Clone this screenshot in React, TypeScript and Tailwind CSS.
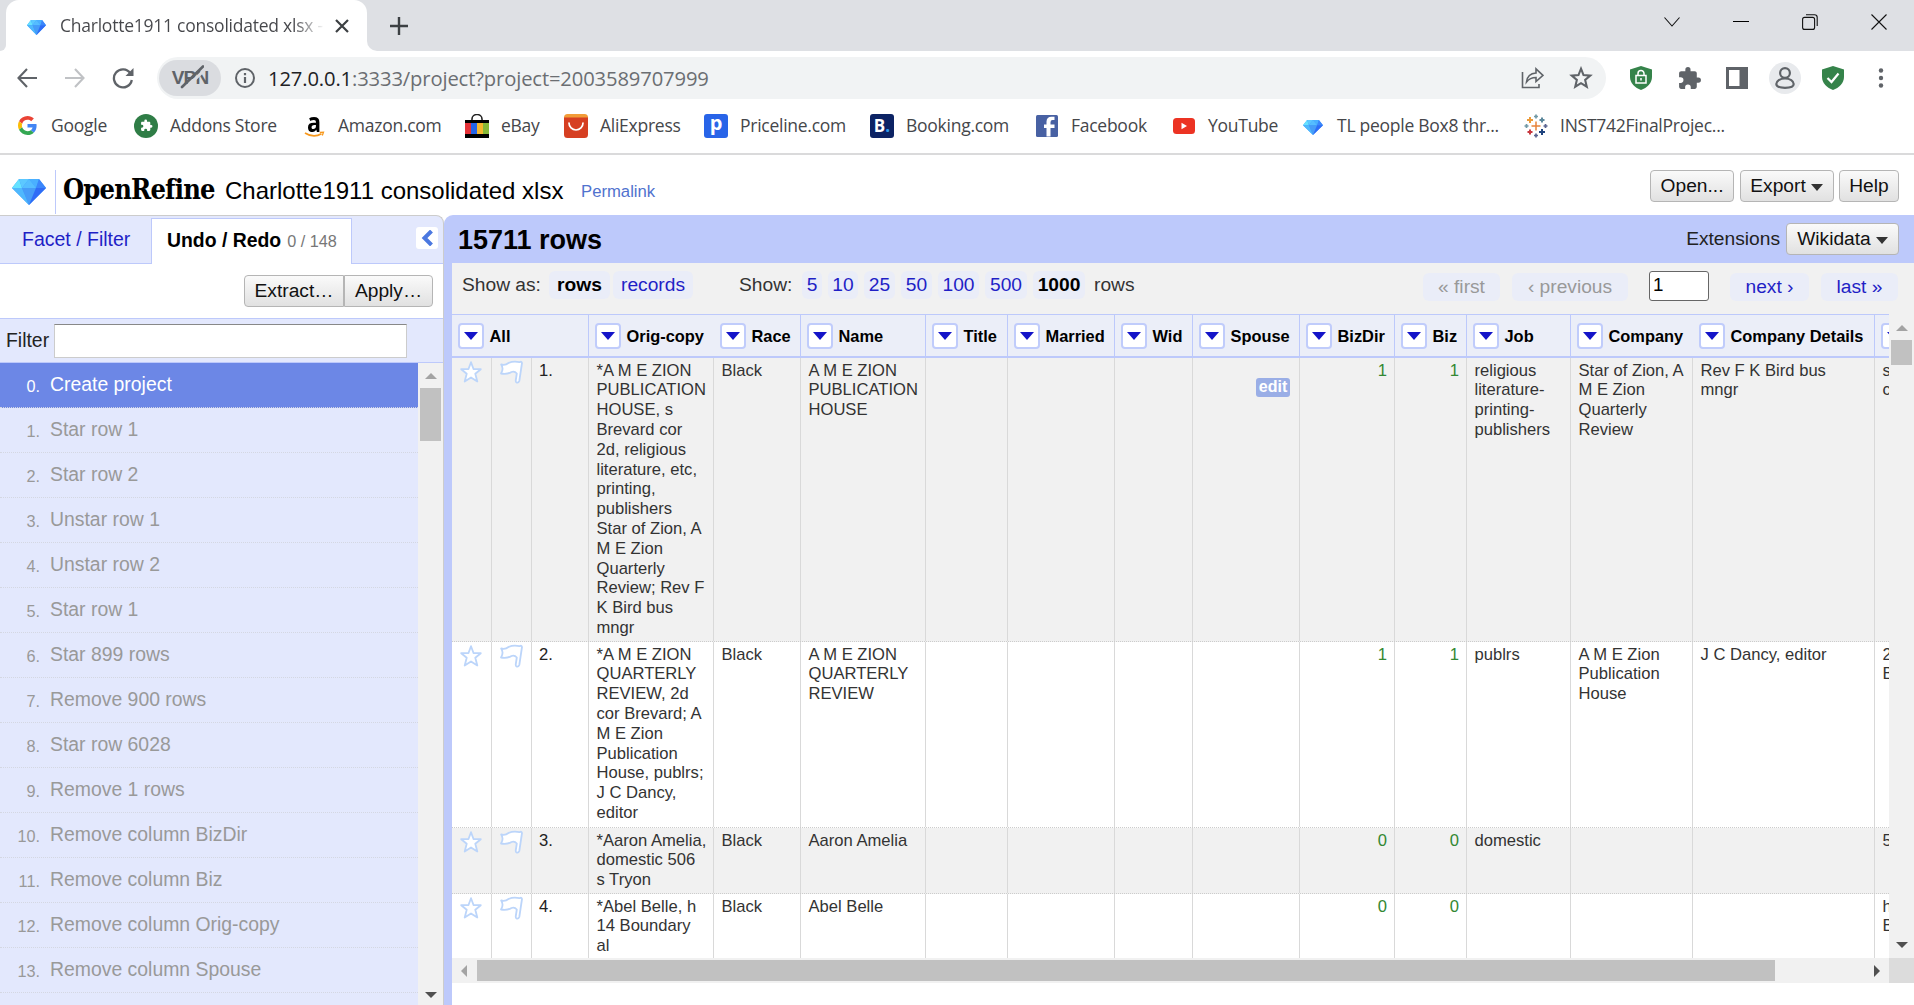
import React from "react";

const ARIAL = "font-['Liberation_Sans',Arial,sans-serif]";
const SEGOE = "font-['Open_Sans','Noto_Sans',sans-serif]";

function Diamond({ className }: { className: string }) {
  return (
    <svg viewBox="0 0 34 26" className={className} preserveAspectRatio="none">
      <path d="M7 0H27L34 9L17 26L0 9Z" fill="#3d9bfb" />
      <path d="M7 0L0 9H10Z" fill="#66e2ff" />
      <path d="M7 0H17L10 9Z" fill="#5cc8ff" />
      <path d="M17 0H27L24 9Z" fill="#4ab0ff" />
      <path d="M17 0L10 9H24Z" fill="#55bdff" />
      <path d="M27 0L34 9H24Z" fill="#3b86fb" />
      <path d="M0 9H10L17 26Z" fill="#4fb8fd" />
      <path d="M10 9H24L17 26Z" fill="#469cf8" />
      <path d="M24 9H34L17 26Z" fill="#2f6cf6" />
    </svg>
  );
}

function Puzzle({ className }: { className: string }) {
  return (
    <svg viewBox="0 0 24 24" className={className} fill="currentColor">
      <path d="M20.5 11H19V7c0-1.1-.9-2-2-2h-4V3.5a2.5 2.5 0 0 0-5 0V5H4c-1.1 0-2 .9-2 2v3.8h1.5a2.7 2.7 0 0 1 0 5.4H2V20c0 1.1.9 2 2 2h3.8v-1.5a2.7 2.7 0 0 1 5.4 0V22H17c1.1 0 2-.9 2-2v-4h1.5a2.5 2.5 0 0 0 0-5z" />
    </svg>
  );
}

function GoogleIcon() {
  return (
    <svg viewBox="0 0 48 48" className="h-[19px] w-[19px]">
      <path fill="#ea4335" d="M24 9.5c3.5 0 6.7 1.2 9.2 3.6l6.9-6.9C35.9 2.4 30.5 0 24 0 14.6 0 6.5 5.4 2.6 13.2l8 6.2C12.4 13.7 17.7 9.5 24 9.5z" />
      <path fill="#4285f4" d="M47 24.6c0-1.6-.2-3.1-.4-4.6H24v9h12.9c-.6 3-2.2 5.500-4.700 7.200l7.700 6C44.400 38 47 31.800 47 24.600z" />
      <path fill="#fbbc05" d="M10.500 28.600c-.5-1.500-.8-3-.8-4.600s.3-3.100.8-4.600l-8-6.200C.9 16.500 0 20.100 0 24s.9 7.500 2.600 10.800z" />
      <path fill="#34a853" d="M24 48c6.500 0 11.900-2.100 15.900-5.800l-7.700-6c-2.200 1.500-4.900 2.300-8.200 2.300-6.300 0-11.600-4.200-13.500-9.900l-8 6.200C6.500 42.600 14.600 48 24 48z" />
    </svg>
  );
}

function AddonsIcon() {
  return (
    <span className="flex h-6 w-6 items-center justify-center rounded-full bg-[#2f7d46] text-white">
      <Puzzle className="h-[13px] w-[13px]" />
    </span>
  );
}

function AmazonIcon() {
  return (
    <span className="relative block h-6 w-6">
      <span className={`absolute -top-[7px] left-[5px] origin-left scale-x-90 text-[26px] leading-[30px] font-bold text-black ${SEGOE}`}>a</span>
      <svg viewBox="0 0 24 24" className="absolute inset-0 h-6 w-6" fill="none">
        <path d="M3 19Q11.500 24.500 19.500 19.800" stroke="#f7981d" strokeWidth="1.700" />
        <path d="M17.800 18.300L21.500 18.200L20.300 21.500" stroke="#f7981d" strokeWidth="1.300" />
      </svg>
    </span>
  );
}

function EbayIcon() {
  return (
    <svg viewBox="0 0 24 24" className="h-6 w-6">
      <path d="M7 8V5a5 4.500 0 0 1 10 0v3" fill="none" stroke="#222" strokeWidth="1.600" />
      <path d="M0 6H24V24H0z" fill="#000" />
      <path d="M7.800 6a4.200 4.200 0 0 1 8.400 0z" fill="#fff" />
      <path d="M0 9H6V20H0z" fill="#e53238" />
      <path d="M6 9H12V20H6z" fill="#2565e8" />
      <path d="M12 9H18V20H12z" fill="#f5b72d" />
      <path d="M18 9H24V20H18z" fill="#86b837" />
    </svg>
  );
}

function AliIcon() {
  return (
    <svg viewBox="0 0 24 24" className="h-6 w-6">
      <rect width="24" height="14" rx="3.500" fill="#f29c38" />
      <path d="M0 3.500H24V20.500a3.500 3.500 0 0 1-3.500 3.500h-17A3.500 3.500 0 0 1 0 20.500z" fill="#d63f22" />
      <path d="M5 9a7 7 0 0 0 14 0" fill="none" stroke="#fff" strokeWidth="1.700" strokeLinecap="round" />
    </svg>
  );
}

function PricelineIcon() {
  return (
    <span className={`flex h-6 w-6 items-center justify-center rounded-[3px] bg-[#2864e8] text-[20px] leading-none font-bold text-white ${SEGOE}`}>
      <span className="-mt-[5px]">p</span>
    </span>
  );
}

function BookingIcon() {
  return (
    <span className={`flex h-6 w-6 items-center justify-center rounded-[3px] bg-[#0c2364] text-[17px] leading-none font-bold text-white ${SEGOE}`}>
      B<span className="text-[#2d9cf0]">.</span>
    </span>
  );
}

function FacebookIcon() {
  return (
    <svg viewBox="0 0 22 22" className="h-[22px] w-[22px]">
      <rect width="22" height="22" rx="1.500" fill="#4861a3" />
      <path d="M18.500 5H16.500Q14.500 5 14.500 7.200V9.500H18.500V13H14.500V21.500H10.500V13H8V9.500H10.500V6.500Q10.700 1.800 15.500 1.800H18.500z" fill="#fff" />
    </svg>
  );
}

function YoutubeIcon() {
  return (
    <svg viewBox="0 0 22 16" className="h-4 w-[22px]">
      <rect width="22" height="16" rx="3.500" fill="#ec3323" />
      <path d="M8.500 4.700L14 8L8.500 11.300z" fill="#fff" />
    </svg>
  );
}

function TableauIcon() {
  return (
    <svg viewBox="0 0 24 24" className="h-6 w-6" fill="none">
      <path d="M12 7.500V16.500M7.500 12H16.500" stroke="#e8833a" strokeWidth="1.500" />
      <path d="M6 3V9M3 6H9" stroke="#eb9b3a" strokeWidth="2" />
      <path d="M18 3.500V8.500M15.500 6H20.500" stroke="#5b879b" strokeWidth="2" />
      <path d="M6 15.500V20.500M3.500 18H8.500" stroke="#c8383f" strokeWidth="2" />
      <path d="M18 15V21M15 18H21" stroke="#1f447e" strokeWidth="2" />
      <path d="M12 .5V4.500M10 2.500H14M2.500 10V14M.5 12H4.500" stroke="#7199a6" strokeWidth="1.700" />
      <path d="M12 19.500V23.500M10 21.500H14M21.500 10V14M19.500 12H23.500" stroke="#5b6591" strokeWidth="1.700" />
    </svg>
  );
}

const bookmarks: { label: string; icon: React.ReactNode; cls: string }[] = [
  { label: "Google", icon: <GoogleIcon />, cls: "w-[119px]" },
  { label: "Addons Store", icon: <AddonsIcon />, cls: "w-[168px]" },
  { label: "Amazon.com", icon: <AmazonIcon />, cls: "w-[163px]" },
  { label: "eBay", icon: <EbayIcon />, cls: "w-[99px]" },
  { label: "AliExpress", icon: <AliIcon />, cls: "w-[140px]" },
  { label: "Priceline.com", icon: <PricelineIcon />, cls: "w-[166px]" },
  { label: "Booking.com", icon: <BookingIcon />, cls: "w-[165px]" },
  { label: "Facebook", icon: <FacebookIcon />, cls: "w-[137px]" },
  { label: "YouTube", icon: <YoutubeIcon />, cls: "w-[129px]" },
  { label: "TL people Box8 thr...", icon: <Diamond className="mt-[3px] h-[15px] w-[20px]" />, cls: "w-[223px]" },
  { label: "INST742FinalProjec...", icon: <TableauIcon />, cls: "w-[220px]" },
];

function Shield({ children }: { children: React.ReactNode }) {
  return (
    <svg viewBox="0 0 22 24" className="h-6 w-[22px]">
      <path d="M11 0L22 3.500V11C22 17 17 22 11 24C5 22 0 17 0 11V3.500z" fill="#35834a" />
      {children}
    </svg>
  );
}

function TabStrip() {
  return (
    <div className="flex h-[51px] bg-[#dee0e4]">
      <div className="flex w-[6px] items-end bg-white">
        <div className="h-full w-full rounded-br-[10px] bg-[#dee0e4]" />
      </div>
      <div className="bg-[#dee0e4]">
        <div className="flex h-[51px] w-[361px] items-center rounded-t-[13px] bg-white pl-[21px]">
          <Diamond className="mt-1 h-[15px] w-[19px]" />
          <div className={`ml-[14px] w-[265px] overflow-hidden bg-linear-to-r from-[#45464a] from-[88%] to-transparent bg-clip-text text-[17.5px] tracking-[-0.24px] whitespace-nowrap text-transparent ${SEGOE}`}>
            Charlotte1911 consolidated xlsx -
          </div>
          <svg viewBox="0 0 14 14" className="ml-[10px] h-[14px] w-[14px]" stroke="#3c4043" strokeWidth="2.200">
            <path d="M1 1L13 13M13 1L1 13" />
          </svg>
        </div>
      </div>
      <div className="bg-white">
        <div className="flex h-full items-center rounded-bl-[10px] bg-[#dee0e4] pl-[23px]">
          <svg viewBox="0 0 18 18" className="h-[18px] w-[18px]" stroke="#3c4043" strokeWidth="2.400">
            <path d="M9 0V18M0 9H18" />
          </svg>
        </div>
      </div>
      <div className="ml-auto flex h-[43px] items-center">
        <svg viewBox="0 0 16 10" className="mr-[53px] h-[10px] w-4" fill="none" stroke="#111" strokeWidth="1.100">
          <path d="M.5 .5L8 9L15.500 .5" />
        </svg>
        <div className="mr-[53px] h-px w-[16px] bg-black" />
        <svg viewBox="0 0 16 16" className="mr-[53px] h-4 w-4" fill="none" stroke="#111" strokeWidth="1.100">
          <rect x=".6" y="3.400" width="12" height="12" rx="2" />
          <path d="M4 .8H12.500Q15.200 .8 15.200 3.500V12" />
        </svg>
        <svg viewBox="0 0 16 16" className="mr-[27px] h-4 w-4" stroke="#111" strokeWidth="1.100">
          <path d="M.5 .5L15.500 15.500M15.500 .5L.5 15.500" />
        </svg>
      </div>
    </div>
  );
}

function AddressBar() {
  return (
    <div className="flex h-[54px] items-center bg-white">
      <svg viewBox="0 0 20 20" className="ml-[17px] h-5 w-5" fill="none" stroke="#5f6368" strokeWidth="2.100">
        <path d="M20 10H1.500M10 1L1.500 10L10 19" />
      </svg>
      <svg viewBox="0 0 20 20" className="ml-[28px] h-5 w-5" fill="none" stroke="#c0c2c5" strokeWidth="2.100">
        <path d="M0 10H18.500M10 1L18.500 10L10 19" />
      </svg>
      <svg viewBox="0 0 22 22" className="ml-[27px] h-[22px] w-[22px]" fill="none">
        <path d="M18.300 6.200A9 9 0 1 0 19.800 13" stroke="#5f6368" strokeWidth="2.300" />
        <path d="M21.500 1V9H13.500z" fill="#5f6368" />
      </svg>
      <div className="ml-[23px] flex h-[42px] w-[1449px] items-center rounded-full bg-[#f1f3f4]">
        <div className="relative ml-[2px] flex h-[36px] w-[62px] items-center justify-center rounded-full bg-[#dadce0]">
          <span className={`text-[19px] font-bold tracking-[-0.8px] text-[#5f6368] ${ARIAL}`}>VPN</span>
          <svg viewBox="0 0 24 24" className="absolute top-[5px] left-[21px] h-6 w-6" fill="none">
            <path d="M4.500 24.500L26 3.500" stroke="#dadce0" strokeWidth="3" />
            <path d="M2 22L23 1.500" stroke="#5f6368" strokeWidth="2.600" strokeLinecap="round" />
          </svg>
        </div>
        <svg viewBox="0 0 20 20" className="ml-[14px] h-5 w-5" fill="none" stroke="#5f6368" strokeWidth="2">
          <circle cx="10" cy="10" r="9" />
          <path d="M10 9V15M10 5V7.200" strokeWidth="2.200" />
        </svg>
        <div className={`mt-px ml-[13px] text-[20.2px] tracking-[-0.13px] text-[#6b6e72] ${SEGOE}`}>
          <span className="text-[#202124]">127.0.0.1</span>:3333/project?project=2003589707999
        </div>
        <svg viewBox="0 0 22 22" className="mr-[25px] ml-auto h-[22px] w-[23px]" fill="none" stroke="#5f6368" strokeWidth="1.600">
          <path d="M1 5V20.500H17.500V17" />
          <path d="M5 15Q6 6.500 14.500 6V1.800L21.500 8.300L14.500 14.500V10.500Q8.500 10.500 5 15z" />
        </svg>
        <svg viewBox="0 0 22 22" className="mr-[13px] h-[24px] w-[24px]" fill="none" stroke="#5f6368" strokeWidth="1.900">
          <path d="M11 2.500L13.300 8.300L19.500 8.800L14.800 12.800L16.300 19L11 15.700L5.700 19L7.200 12.800L2.500 8.800L8.700 8.300z" />
        </svg>
      </div>
      <div className="ml-[24px] flex items-center">
        <Shield>
          <rect x="6" y="9.500" width="10" height="7.500" fill="none" stroke="#fff" strokeWidth="1.500" />
          <path d="M8 9.500V7.500a3 3 0 0 1 6 0V9.500M11 12V14.500" fill="none" stroke="#fff" strokeWidth="1.500" />
        </Shield>
        <Puzzle className="ml-[25px] h-[25px] w-[25px] text-[#5f6368]" />
        <svg viewBox="0 0 22 22" className="ml-[24px] h-[22px] w-[22px]">
          <path d="M0 0H22V22H0z" fill="#5f6368" />
          <path d="M3 3H13.500V19H3z" fill="#fff" />
        </svg>
        <span className="ml-[21px] flex h-8 w-8 items-center justify-center rounded-full bg-[#e8eaed]">
          <svg viewBox="0 0 20 22" className="h-[22px] w-5" fill="none" stroke="#5f6368" strokeWidth="2.200">
            <circle cx="10" cy="6" r="4.900" />
            <path d="M10 11.500C5 11.500 1.300 14 1.300 17C1.300 19.500 3.500 20.800 10 20.800S18.700 19.500 18.700 17C18.700 14 15 11.500 10 11.500z" />
          </svg>
        </span>
        <span className="ml-[21px] flex">
          <Shield>
            <path d="M5.500 12L9.500 16L16.500 7.500" fill="none" stroke="#fff" strokeWidth="2.200" />
          </Shield>
        </span>
        <svg viewBox="0 0 6 20" className="ml-[34px] h-5 w-[6px]" fill="#5f6368">
          <circle cx="3" cy="2.500" r="2.200" />
          <circle cx="3" cy="10" r="2.200" />
          <circle cx="3" cy="17.500" r="2.200" />
        </svg>
      </div>
    </div>
  );
}

function BookmarkBar() {
  return (
    <div className={`flex h-[50px] items-center border-b-2 border-[#dadadb] bg-white pb-[7px] pl-[15px] ${SEGOE}`}>
      {bookmarks.map((b) => (
        <div key={b.label} className={`flex shrink-0 items-center ${b.cls}`}>
          <span className="flex w-6 items-center justify-center">{b.icon}</span>
          <span className="ml-3 text-[17.5px] tracking-[-0.26px] whitespace-nowrap text-[#45464a]">{b.label}</span>
        </div>
      ))}
    </div>
  );
}

function Btn({ children, className = "", caret = false }: { children: React.ReactNode; className?: string; caret?: boolean }) {
  return (
    <button
      className={`flex h-8 items-center justify-center border border-[#b5b5b5] bg-linear-to-b from-[#fafafa] to-[#e1e1e1] pb-px text-[19.2px] leading-none whitespace-nowrap text-[#111] ${className}`}
    >
      {children}
      {caret && <span className="mt-[3px] ml-[5px] border-x-[6px] border-t-[7px] border-x-transparent border-t-[#333]" />}
    </button>
  );
}

function AppHeader() {
  return (
    <div className="flex h-[60px] items-start bg-white">
      <Diamond className="mt-[24px] ml-[12px] h-[26px] w-[34px]" />
      <div className="mt-[15px] ml-[9px] h-[44px] w-px bg-[#bdc9fb]" />
      <div className="mt-[17px] ml-[7px] w-[162px] text-[27px] leading-[36px] font-bold tracking-[-0.8px] text-black font-['DejaVu_Serif_Condensed','DejaVu_Serif',serif]">
        OpenRefine
      </div>
      <div className="mt-[21px] w-[356px] text-[24px] leading-[30px] whitespace-nowrap text-black">Charlotte1911 consolidated xlsx</div>
      <div className="mt-[26px] text-[16.7px] leading-[22px] text-[#5072ce]">Permalink</div>
      <div className="mt-[15px] mr-[15px] ml-auto flex gap-[5.5px]">
        <Btn className="w-[84px] rounded-[4px]">Open...</Btn>
        <Btn className="w-[94px] rounded-[4px]" caret>Export</Btn>
        <Btn className="w-[60px] rounded-[4px]">Help</Btn>
      </div>
    </div>
  );
}

const history = [
  "Create project",
  "Star row 1",
  "Star row 2",
  "Unstar row 1",
  "Unstar row 2",
  "Star row 1",
  "Star 899 rows",
  "Remove 900 rows",
  "Star row 6028",
  "Remove 1 rows",
  "Remove column BizDir",
  "Remove column Biz",
  "Remove column Orig-copy",
  "Remove column Spouse",
  "",
];

function LeftPanel() {
  return (
    <div className="flex h-full w-[444px] shrink-0 flex-col rounded-tr-[8px] border-t border-r border-[#ccc] bg-[#e3e8fd]">
      <div className="flex h-[48px] shrink-0 items-end border-b border-[#bdc9fb]">
        <div className="flex h-[46px] w-[151px] items-center pb-px pl-[22px] text-[19.5px] text-[#1f1fc6]">Facet / Filter</div>
        <div className="-mb-px flex h-[46px] w-[201px] items-baseline border border-b-0 border-[#bdc9fb] bg-white pt-[7px] pl-[15px] whitespace-nowrap text-black">
          <span className="text-[19.4px] font-bold">Undo / Redo</span>
          <span className="ml-[6px] text-[16.25px] text-[#777]">0 / 148</span>
        </div>
        <div className="mr-[5px] mb-[14px] ml-auto flex h-[22px] w-[22px] items-center justify-center rounded-[3px] bg-white">
          <svg viewBox="0 0 12 16" className="h-4 w-3" fill="none" stroke="#4b78e0" strokeWidth="4">
            <path d="M10.500 1L3.500 8L10.500 15" />
          </svg>
        </div>
      </div>
      <div className="flex h-[55px] shrink-0 justify-end border-b border-[#bdc9fb] bg-white pt-[11px] pr-[10px]">
        <Btn className="w-[100px] rounded-l-[4px]">Extract…</Btn>
        <Btn className="w-[89px] rounded-r-[4px]">Apply…</Btn>
      </div>
      <div className="flex h-[44px] shrink-0 items-center border-b border-[#bdc9fb] pl-[6px]">
        <label className="w-[48px] text-[19.4px] text-[#222]">Filter</label>
        <input className="h-[34px] w-[353px] border border-[#ccc] border-t-[#888] bg-white" />
      </div>
      <div className="flex min-h-0 flex-1">
        <div className="w-[418px] overflow-hidden">
          {history.map((h, i) => (
            <div
              key={i}
              className={`flex h-[45px] items-baseline border-b border-dotted border-[#d4d7e2] pt-[7px] whitespace-nowrap ${
                i === 0 ? "bg-[#6c87e6] text-white" : "text-[#999]"
              }`}
            >
              <span className="w-[40px] translate-y-px text-right text-[16.25px]">{h ? `${i}.` : ""}</span>
              <span className="ml-[10px] text-[19.4px]">{h}</span>
            </div>
          ))}
        </div>
        <div className="flex w-[25px] flex-col items-center bg-[#f1f1f1]">
          <span className="mt-[10px] border-x-[6px] border-b-[6px] border-x-transparent border-b-[#a3a3a3]" />
          <span className="mt-[9px] h-[53px] w-[21px] bg-[#c1c1c1]" />
          <span className="mt-auto mb-[7px] border-x-[6px] border-t-[6px] border-x-transparent border-t-[#505050]" />
        </div>
      </div>
    </div>
  );
}

function Pill({ children, className }: { children: React.ReactNode; className: string }) {
  return <span className={`flex h-7 items-center justify-center rounded-[6px] bg-[#eaedf8] whitespace-nowrap ${className}`}>{children}</span>;
}

function Controls() {
  return (
    <div className="flex h-[51px] shrink-0 items-start bg-[#f1f1f1] pt-[8px] text-[19.2px] text-[#1f1fc6]">
      <span className="ml-[10px] w-[87px] leading-[28px] text-[#333]">Show as:</span>
      <Pill className="w-[61px] font-bold text-black">rows</Pill>
      <Pill className="ml-[3px] w-[80px]">records</Pill>
      <span className="ml-[46px] w-[63px] leading-[28px] text-[#333]">Show:</span>
      <div className="flex gap-[6px]">
        <Pill className="w-[20px]">5</Pill>
        <Pill className="w-[30px]">10</Pill>
        <Pill className="w-[31px]">25</Pill>
        <Pill className="w-[31px]">50</Pill>
        <Pill className="w-[41px]">100</Pill>
        <Pill className="w-[42px]">500</Pill>
        <Pill className="w-[52px] font-bold text-black">1000</Pill>
      </div>
      <span className="ml-[9px] leading-[28px] text-[#333]">rows</span>
      <div className="mr-[16px] ml-auto flex">
        <Pill className="mt-[2px] w-[77px] text-[#999]">« first</Pill>
        <Pill className="mt-[2px] ml-[12px] w-[116px] text-[#999]">‹ previous</Pill>
        <input defaultValue="1" className="ml-[21px] h-[30px] w-[60px] rounded-[3px] border border-[#666] bg-white pb-[3px] pl-[3px] text-[18.75px] text-black" />
        <Pill className="mt-[2px] ml-[21px] w-[79px]">next ›</Pill>
        <Pill className="mt-[2px] ml-[12px] w-[77px]">last »</Pill>
      </div>
    </div>
  );
}

const headers: { label: string; cls: string }[] = [
  { label: "All", cls: "w-[137px] border-[#bdc9fb]" },
  { label: "Orig-copy", cls: "w-[125px] border-transparent" },
  { label: "Race", cls: "w-[87px] border-[#bdc9fb]" },
  { label: "Name", cls: "w-[125px] border-[#bdc9fb]" },
  { label: "Title", cls: "w-[82px] border-[#bdc9fb]" },
  { label: "Married", cls: "w-[107px] border-[#bdc9fb]" },
  { label: "Wid", cls: "w-[78px] border-[#bdc9fb]" },
  { label: "Spouse", cls: "w-[107px] border-[#bdc9fb]" },
  { label: "BizDir", cls: "w-[95px] border-[#bdc9fb]" },
  { label: "Biz", cls: "w-[72px] border-[#bdc9fb]" },
  { label: "Job", cls: "w-[104px] border-[#bdc9fb]" },
  { label: "Company", cls: "w-[122px] border-transparent" },
  { label: "Company Details", cls: "w-[182px] border-[#bdc9fb]" },
  { label: "", cls: "w-[120px] border-[#bdc9fb]" },
];

const cellWidths = [
  "w-[125px]",
  "w-[87px]",
  "w-[125px]",
  "w-[82px]",
  "w-[107px]",
  "w-[78px]",
  "w-[107px]",
  "w-[95px] text-right text-[#338833]",
  "w-[72px] text-right text-[#338833]",
  "w-[104px]",
  "w-[122px]",
  "w-[182px]",
  "w-[120px]",
];

const rows: { h: string; lines: string[][] }[] = [
  {
    h: "h-[284px] bg-[#f1f1f1]",
    lines: [
      ["*A M E ZION", "PUBLICATION", "HOUSE, s", "Brevard cor", "2d, religious", "literature, etc,", "printing,", "publishers", "Star of Zion, A", "M E Zion", "Quarterly", "Review; Rev F", "K Bird bus", "mngr"],
      ["Black"],
      ["A M E ZION", "PUBLICATION", "HOUSE"],
      [], [], [],
      ["@edit"],
      ["1"],
      ["1"],
      ["religious", "literature-", "printing-", "publishers"],
      ["Star of Zion, A", "M E Zion", "Quarterly", "Review"],
      ["Rev F K Bird bus", "mngr"],
      ["s", "c"],
    ],
  },
  {
    h: "h-[186px] bg-white",
    lines: [
      ["*A M E ZION", "QUARTERLY", "REVIEW, 2d", "cor Brevard; A", "M E Zion", "Publication", "House, publrs;", "J C Dancy,", "editor"],
      ["Black"],
      ["A M E ZION", "QUARTERLY", "REVIEW"],
      [], [], [], [],
      ["1"],
      ["1"],
      ["publrs"],
      ["A M E Zion", "Publication", "House"],
      ["J C Dancy, editor"],
      ["2", "B"],
    ],
  },
  {
    h: "h-[66px] bg-[#f1f1f1]",
    lines: [["*Aaron Amelia,", "domestic 506", "s Tryon"], ["Black"], ["Aaron Amelia"], [], [], [], [], ["0"], ["0"], ["domestic"], [], [], ["5"]],
  },
  {
    h: "h-[66px] bg-white",
    lines: [["*Abel Belle, h", "14 Boundary", "al"], ["Black"], ["Abel Belle"], [], [], [], [], ["0"], ["0"], [], [], [], ["h", "B"]],
  },
];

function StarIcon() {
  return (
    <svg viewBox="0 0 22 22" className="h-[22px] w-[22px]" fill="#fff" stroke="#bcd5fa" strokeWidth="1.800" strokeLinejoin="round">
      <path d="M11 1.200L13.500 8L20.800 8.200L15.300 12.800L17.300 20.500L11 16.500L4.700 20.500L6.700 12.800L1.200 8.200L8.500 8z" />
    </svg>
  );
}

function FlagIcon() {
  return (
    <svg viewBox="0 0 24 24" className="h-6 w-6" fill="#fff" stroke="#bcd5fa" strokeWidth="1.800" strokeLinejoin="round">
      <path d="M20.500 2.200Q22.800 1 23 3L20.300 21Q19.300 23.200 17.500 22.500Q16.500 22 16.800 20L17.800 13.500Q15.500 10.800 12.500 12Q8.500 14.500 2 13.500Q5 9 2.200 4.500Q6.500 5.500 9.500 3Q14.500 .8 20.500 2.200z" />
    </svg>
  );
}

function DataTable() {
  return (
    <div className="flex h-[669px] flex-col">
      <div className="flex h-[644px]">
        <div className="flex w-[1437px] flex-col overflow-hidden">
          <div className="flex h-[44px] w-max shrink-0 border-t border-b-2 border-[#bdc9fb] bg-[#ebeef8]">
            {headers.map((h, i) => (
              <div key={i} className={`flex shrink-0 items-center border-r pl-[6px] ${h.cls}`}>
                <span className="flex h-[26px] w-[26px] shrink-0 items-center justify-center rounded-[4px] border-2 border-[#c0ccfb] bg-white">
                  <span className="border-x-[7px] border-t-[8px] border-x-transparent border-t-[#1414c8]" />
                </span>
                <span className="mt-px ml-[5.5px] text-[16.4px] font-bold whitespace-nowrap text-black">{h.label}</span>
              </div>
            ))}
          </div>
          {rows.map((r, i) => (
            <div key={i} className={`flex w-max shrink-0 border-b border-dotted border-[#ccc] text-[16.6px] leading-[19.800px] text-[#333] ${r.h}`}>
              <div className="flex w-[40px] shrink-0 border-r border-[#d9d9d9] pt-[3px] pl-[8px]"><StarIcon /></div>
              <div className="flex w-[40px] shrink-0 border-r border-[#d9d9d9] pt-[2px] pl-[7px]"><FlagIcon /></div>
              <div className="w-[57px] shrink-0 border-r border-[#d9d9d9] pt-[2.600px] pl-[7px] text-[#222]">{i + 1}.</div>
              {r.lines.map((lines, c) => (
                <div key={c} className={`shrink-0 border-r border-[#d9d9d9] pt-[2.600px] pr-[7px] pl-[7.500px] whitespace-nowrap ${cellWidths[c]}`}>
                  {lines[0] === "@edit" ? (
                    <span className="mt-[17px] mr-[2px] ml-auto flex h-[19px] w-[34px] items-center justify-center rounded-[3px] bg-[#9aaee6] pb-px text-[16px] font-bold text-white">
                      edit
                    </span>
                  ) : (
                    lines.map((l, k) => <div key={k}>{l}</div>)
                  )}
                </div>
              ))}
            </div>
          ))}
        </div>
        <div className="flex w-[25px] flex-col items-center bg-[#f1f1f1]">
          <span className="mt-[11px] border-x-[6px] border-b-[6px] border-x-transparent border-b-[#a3a3a3]" />
          <span className="mt-[9px] h-[25px] w-[21px] bg-[#c1c1c1]" />
          <span className="mt-auto mb-[10px] border-x-[6px] border-t-[6px] border-x-transparent border-t-[#505050]" />
        </div>
      </div>
      <div className="flex h-[25px] items-center bg-[#f1f1f1]">
        <span className="ml-[9px] border-y-[6px] border-r-[6px] border-y-transparent border-r-[#a3a3a3]" />
        <span className="ml-[10px] h-[21px] w-[1298px] bg-[#c1c1c1]" />
        <span className="ml-auto border-y-[6px] border-l-[6px] border-y-transparent border-l-[#505050]" />
        <span className="ml-[9px] h-full w-[25px] bg-[#dcdcdc]" />
      </div>
    </div>
  );
}

export default function App() {
  return (
    <div className={`flex h-[1005px] w-[1914px] flex-col overflow-hidden bg-white ${ARIAL}`}>
      <TabStrip />
      <AddressBar />
      <BookmarkBar />
      <AppHeader />
      <div className="flex min-h-0 flex-1">
        <LeftPanel />
        <div className="flex min-w-0 flex-1 flex-col rounded-tl-[9px] bg-[#bdc9fb]">
          <div className="flex h-[48px] shrink-0 items-center pl-[14px] text-black">
            <span className="mt-[3px] text-[27px] leading-none font-bold">15711 rows</span>
            <span className="mr-[6px] ml-auto text-[19.2px] text-[#222]">Extensions</span>
            <Btn className="mr-[15px] w-[113px] rounded-[4px]" caret>Wikidata</Btn>
          </div>
          <div className="ml-[8px] flex flex-1 flex-col bg-white">
            <Controls />
            <DataTable />
          </div>
        </div>
      </div>
    </div>
  );
}
